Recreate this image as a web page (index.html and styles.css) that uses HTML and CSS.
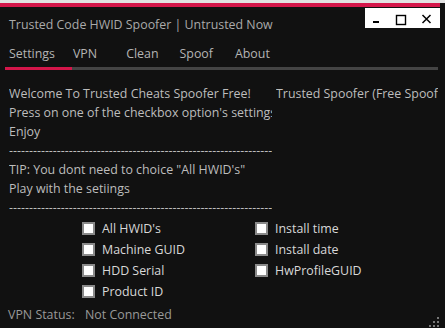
FILE: index.html
```html
<!DOCTYPE html>
<html>
<head>
<meta charset="utf-8">
<link rel="stylesheet" href="styles.css">
</head>
<body>
<div class="strip"></div>
<div class="window">
  <div class="accent"></div>
  <div class="titlebar">
    <div class="title">Trusted Code HWID Spoofer | Untrusted Now</div>
    <div class="controls">
      <svg width="75" height="20" viewBox="0 0 75 20">
        <rect x="8" y="13" width="6" height="2" fill="#000"/>
        <rect x="31.5" y="7.5" width="9" height="9" fill="none" stroke="#000" stroke-width="1.4"/>
        <path d="M57.5 7 L65.5 15 M65.5 7 L57.5 15" stroke="#000" stroke-width="1.5"/>
      </svg>
    </div>
  </div>
  <div class="tabs">
    <span class="tab t1">Settings</span>
    <span class="tab t2">VPN</span>
    <span class="tab t3">Clean</span>
    <span class="tab t4">Spoof</span>
    <span class="tab t5">About</span>
  </div>
  <div class="tabline"><div class="tabsel"></div></div>
  <div class="content">
    <div class="left">
      <div class="line">Welcome To Trusted Cheats Spoofer Free!</div>
      <div class="line">Press on one of the checkbox option's settings</div>
      <div class="line">Enjoy</div>
      <div class="line dash">--------------------------------------------------------------------</div>
      <div class="line">TIP: You dont need to choice "All HWID's"</div>
      <div class="line">Play with the setiings</div>
      <div class="line dash">--------------------------------------------------------------------</div>
    </div>
    <div class="right">
      <div class="line">Trusted Spoofer (Free Spoofer)</div>
    </div>
  </div>
  <div class="checks">
    <div class="col c1">
      <label class="chk"><span class="box"></span>All HWID's</label>
      <label class="chk"><span class="box"></span>Machine GUID</label>
      <label class="chk"><span class="box"></span>HDD Serial</label>
      <label class="chk"><span class="box"></span>Product ID</label>
    </div>
    <div class="col c2">
      <label class="chk"><span class="box"></span>Install time</label>
      <label class="chk"><span class="box"></span>Install date</label>
      <label class="chk"><span class="box"></span>HwProfileGUID</label>
    </div>
  </div>
  <div class="status"><span class="slabel">VPN Status:</span><span class="sval">Not Connected</span></div>
  <svg class="grip" width="12" height="12" viewBox="0 0 12 12">
    <rect x="9" y="1" width="2" height="2" fill="#777"/>
    <rect x="5" y="5" width="2" height="2" fill="#777"/>
    <rect x="9" y="5" width="2" height="2" fill="#777"/>
    <rect x="1" y="9" width="2" height="2" fill="#777"/>
    <rect x="5" y="9" width="2" height="2" fill="#777"/>
    <rect x="9" y="9" width="2" height="2" fill="#777"/>
  </svg>
</div>
</body>
</html>
```
FILE: styles.css
```css
html, body {
  margin: 0;
  padding: 0;
  background: #111111;
  overflow: hidden;
}
body {
  width: 445px;
  height: 328px;
  font-family: "Open Sans", "Noto Sans", sans-serif;
  font-size: 12.4px;
}
.strip {
  height: 3px;
  background: #e2e2e2;
}
.window {
  position: relative;
  width: 440px;
  height: 325px;
  background: #111111;
}
.accent {
  height: 4px;
  background: #d4164a;
}
.titlebar {
  display: flex;
  justify-content: space-between;
  align-items: flex-start;
  height: 21px;
}
.title {
  color: #aaaaaa;
  padding-left: 9px;
  margin-top: 8px;
  line-height: 20px;
}
.controls {
  margin-top: 1px;
  width: 75px;
  height: 20px;
  background: #ffffff;
}
.controls svg { display: block; }
.tabs {
  display: flex;
  height: 39px;
  box-sizing: border-box;
  padding-top: 16px;
  align-items: flex-start;
  color: #b4b4b4;
}
.tab { line-height: 20px; }
.t1 { margin-left: 9px; }
.t2 { margin-left: 18px; }
.t3 { margin-left: 29px; }
.t4 { margin-left: 21px; }
.t5 { margin-left: 22px; }
.tabline {
  margin-left: 5px;
  width: 433px;
  height: 3px;
  background: #444444;
}
.tabsel {
  width: 67px;
  height: 3px;
  background: #d4164a;
}
.content {
  display: flex;
  margin-top: 14px;
  color: #bdbdbd;
}
.left {
  width: 263px;
  margin-left: 9px;
  overflow: hidden;
  white-space: nowrap;
}
.right {
  margin-left: 4px;
  width: 162px;
  overflow: hidden;
  white-space: nowrap;
}
.line {
  height: 19px;
  line-height: 19px;
}
.checks {
  display: flex;
  margin-top: 1px;
}
.col {
  display: flex;
  flex-direction: column;
}
.c1 { margin-left: 82px; width: 173px; }
.chk {
  display: flex;
  align-items: center;
  height: 21px;
  color: #d8d8d8;
}
.box {
  width: 9px;
  height: 9px;
  border: 2px solid #8a8a8a;
  background: #ffffff;
  margin-right: 7px;
  flex: none;
}
.status {
  margin-top: 3px;
  margin-left: 8px;
  color: #999999;
  line-height: 20px;
  display: flex;
}
.slabel { width: 77px; }
.grip {
  position: absolute;
  right: 0;
  bottom: 0;
}
```
